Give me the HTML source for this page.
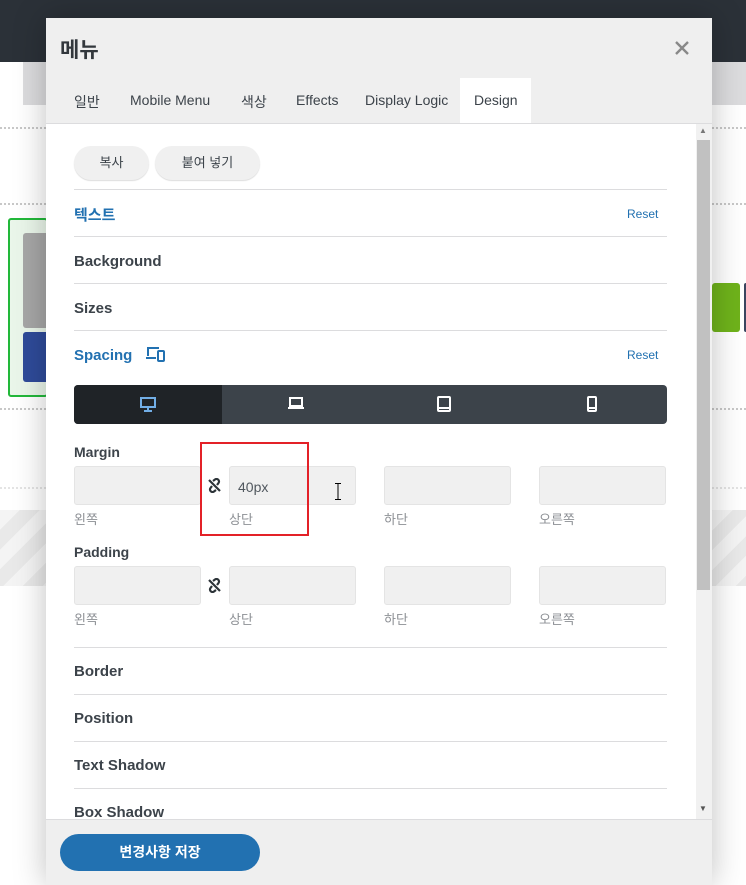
<!DOCTYPE html>
<html><head><meta charset="utf-8"><style>
*{box-sizing:border-box;margin:0;padding:0}
body{width:746px;height:885px;overflow:hidden;background:#fff;position:relative;font-family:"Liberation Sans","Noto Sans CJK KR",sans-serif;color:#3c434a}
.a{position:absolute}
.dot{position:absolute;left:0;width:746px;border-top:2px dotted #c8c8c8}
.lbl{position:absolute;left:74px;font-size:15px;font-weight:bold;color:#3c434a}
.ln{position:absolute;left:74px;width:593px;height:1px;background:#dcdcde}
.inp{position:absolute;width:127px;height:39px;background:#f0f0f0;border:1px solid #e4e4e4;border-radius:3px}
.sub{position:absolute;font-size:13px;color:#8c8f94}
.reset{position:absolute;left:627px;font-size:12px;color:#2271b1}
</style></head><body>
<div class="a" style="left:0;top:0;width:746px;height:62px;background:#2b3138"></div>
<div class="a" style="left:23px;top:62px;width:723px;height:43px;background:#dcdcde"></div>
<div class="dot" style="top:127px"></div>
<div class="dot" style="top:203px"></div>
<div class="dot" style="top:408px"></div>
<div class="dot" style="top:487px;border-color:#e4e4e4"></div>
<div class="a" style="left:8px;top:218px;width:40px;height:179px;border:2px solid #22b83a;background:#eaf6ea;border-radius:3px"></div>
<div class="a" style="left:23px;top:233px;width:30px;height:95px;background:#a7a7a7;border-radius:3px"></div>
<div class="a" style="left:23px;top:332px;width:30px;height:50px;background:#2f4b9a;border-radius:3px"></div>
<div class="a" style="left:712px;top:283px;width:28px;height:49px;background:#6fb31b;border-radius:3px"></div>
<div class="a" style="left:744px;top:283px;width:4px;height:49px;background:#3b4660;border-radius:3px"></div>
<div class="a" style="left:0;top:510px;width:746px;height:76px;background:repeating-linear-gradient(135deg,#f4f4f4 0 14px,#e9e9e9 14px 28px)"></div>
<div class="a" style="left:46px;top:18px;width:666px;height:867px;background:#efefef;box-shadow:0 0 30px rgba(0,0,0,.25)">
 <div class="a" style="left:14px;top:16px;font-size:21px;font-weight:bold;color:#32373c">메뉴</div>
 <svg class="a" style="left:629px;top:23px" width="14" height="14" viewBox="0 0 14 14" stroke="#888" stroke-width="2.4"><path d="M1 1l12 12M13 1L1 13"/></svg>
 <div class="a" style="left:414px;top:60px;width:71px;height:46px;background:#fff"></div>
 <div class="a" style="top:74px;left:28px;font-size:14px;color:#3c434a;white-space:nowrap">
  <span class="a" style="left:0">일반</span><span class="a" style="left:56px">Mobile Menu</span><span class="a" style="left:167px">색상</span><span class="a" style="left:222px">Effects</span><span class="a" style="left:291px">Display Logic</span><span class="a" style="left:400px">Design</span></div>
 <div class="a" style="left:0;top:105px;width:666px;height:696px;background:#fff;border-top:1px solid #dcdcde"></div>
 <div class="a" style="left:650px;top:106px;width:16px;height:695px;background:#f1f1f1"></div>
 <div class="a" style="left:651px;top:122px;width:13px;height:450px;background:#c1c1c1"></div>
 <div class="a" style="left:653px;top:108px;font-size:8px;color:#777">▲</div>
 <div class="a" style="left:653px;top:786px;font-size:8px;color:#555">▼</div>
 <div class="a" style="left:0;top:801px;width:666px;height:1px;background:#dcdcde"></div>
 <div class="a" style="left:14px;top:816px;width:200px;height:37px;border-radius:19px;background:#2271b1;color:#fff;font-size:14px;font-weight:bold;text-align:center;line-height:37px">변경사항 저장</div>
</div>
<div class="a" style="left:74px;top:146px;width:75px;height:34px;border-radius:17px;background:#f0f0f0;box-shadow:0 1px 1px #ddd;font-size:13px;text-align:center;line-height:34px">복사</div>
<div class="a" style="left:155px;top:146px;width:105px;height:34px;border-radius:17px;background:#f0f0f0;box-shadow:0 1px 1px #ddd;font-size:13px;text-align:center;line-height:34px">붙여 넣기</div>
<div class="ln" style="top:189px"></div>
<div class="lbl" style="top:204px;color:#2271b1">텍스트</div><div class="reset" style="top:207px">Reset</div>
<div class="ln" style="top:236px"></div>
<div class="lbl" style="top:253px">Background</div>
<div class="ln" style="top:283px"></div>
<div class="lbl" style="top:300px">Sizes</div>
<div class="ln" style="top:330px"></div>
<div class="lbl" style="top:347px;color:#2271b1">Spacing</div><div class="reset" style="top:348px">Reset</div>
<svg class="a" style="left:145px;top:346px" width="21" height="16" viewBox="0 0 21 16" fill="none" stroke="#2271b1" stroke-width="2"><path d="M3 10V2h11M1 12h10"/><rect x="13" y="5" width="6" height="10" rx="1"/></svg>
<div class="a" style="left:74px;top:385px;width:593px;height:39px;background:#3c434a;border-radius:4px;overflow:hidden"><div style="width:148px;height:39px;background:#1f2327"></div></div>
<svg class="a" style="left:139px;top:396px" width="18" height="16" viewBox="0 0 18 16" fill="none" stroke="#72aee6" stroke-width="2"><rect x="2" y="2" width="14" height="9"/><path d="M9 11v3M5 15h8"/></svg>
<svg class="a" style="left:287px;top:396px" width="18" height="15" viewBox="0 0 18 15" fill="none" stroke="#fff" stroke-width="2"><rect x="3" y="2" width="12" height="8"/><path d="M1 12h16"/></svg>
<svg class="a" style="left:437px;top:396px" width="14" height="16" viewBox="0 0 14 16" fill="none" stroke="#fff" stroke-width="2"><rect x="1" y="1" width="12" height="14" rx="1"/><path d="M2 12h10"/></svg>
<svg class="a" style="left:587px;top:396px" width="10" height="16" viewBox="0 0 10 16" fill="none" stroke="#fff" stroke-width="2"><rect x="1" y="1" width="8" height="14" rx="1"/><path d="M2 12h6"/></svg>
<div class="lbl" style="top:444px;font-size:14px">Margin</div>
<div class="inp" style="left:74px;top:466px"></div>
<div class="inp" style="left:229px;top:466px;font-size:14px;color:#50575e;padding:12px 8px">40px</div>
<div class="inp" style="left:384px;top:466px"></div>
<div class="inp" style="left:539px;top:466px"></div>
<svg class="a" style="left:334px;top:483px" width="8" height="17" viewBox="0 0 8 17" fill="none" stroke="#000" stroke-width="1"><path d="M1 .5h6M1 16.5h6M4 .5v16"/></svg>
<div class="sub" style="left:74px;top:509px">왼쪽</div><div class="sub" style="left:229px;top:509px">상단</div><div class="sub" style="left:384px;top:509px">하단</div><div class="sub" style="left:539px;top:509px">오른쪽</div>
<div class="lbl" style="top:544px;font-size:14px">Padding</div>
<div class="inp" style="left:74px;top:566px"></div><div class="inp" style="left:229px;top:566px"></div><div class="inp" style="left:384px;top:566px"></div><div class="inp" style="left:539px;top:566px"></div>
<div class="sub" style="left:74px;top:609px">왼쪽</div><div class="sub" style="left:229px;top:609px">상단</div><div class="sub" style="left:384px;top:609px">하단</div><div class="sub" style="left:539px;top:609px">오른쪽</div>
<svg class="a" style="left:207px;top:478px" width="15" height="15" viewBox="0 0 15 15" fill="none" stroke="#2c3338" stroke-width="2.2"><path d="M6 3l2-1.5a2.5 2.5 0 013.5 3.5L10 7M9 12l-2 1.5A2.5 2.5 0 013.5 10L5 8M2 2l11 11"/></svg>
<svg class="a" style="left:207px;top:578px" width="15" height="15" viewBox="0 0 15 15" fill="none" stroke="#2c3338" stroke-width="2.2"><path d="M6 3l2-1.5a2.5 2.5 0 013.5 3.5L10 7M9 12l-2 1.5A2.5 2.5 0 013.5 10L5 8M2 2l11 11"/></svg>
<div class="a" style="left:200px;top:442px;width:109px;height:94px;border:2px solid #e32128"></div>
<div class="ln" style="top:647px"></div>
<div class="lbl" style="top:663px">Border</div>
<div class="ln" style="top:694px"></div>
<div class="lbl" style="top:710px">Position</div>
<div class="ln" style="top:741px"></div>
<div class="lbl" style="top:757px">Text Shadow</div>
<div class="ln" style="top:788px"></div>
<div class="a" style="left:46px;top:789px;width:650px;height:30px;overflow:hidden"><div class="lbl" style="left:28px;top:15px">Box Shadow</div></div>
</body></html>
